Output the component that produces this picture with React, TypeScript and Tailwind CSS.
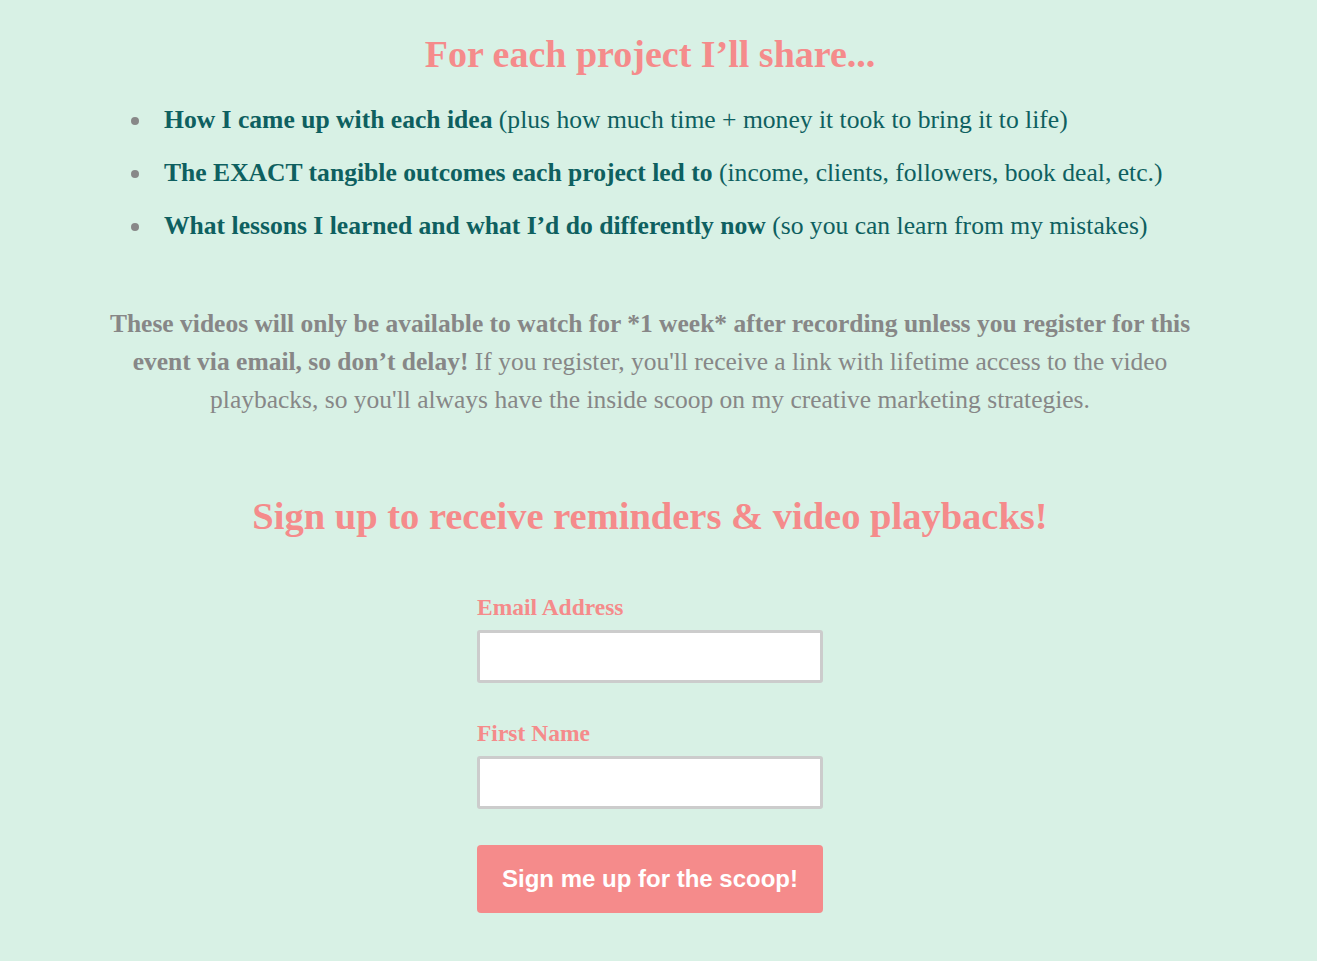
import React from 'react';

const serif = "font-['Liberation_Serif','DejaVu_Serif',serif]";

const bullets = [
  { strong: 'How I came up with each idea', rest: ' (plus how much time + money it took to bring it to life)' },
  { strong: 'The EXACT tangible outcomes each project led to', rest: ' (income, clients, followers, book deal, etc.)' },
  { strong: 'What lessons I learned and what I’d do differently now', rest: ' (so you can learn from my mistakes)' },
];

export default function App() {
  return (
    <div className={`min-h-[961px] w-full bg-[#d8f1e5] pr-[17px] ${serif}`}>
      <div className="mx-auto flex w-full max-w-[1100px] flex-col items-center pt-[30px]">
        <h2 className="text-center text-[38px] font-bold leading-[48px] text-[#f58b8b]">
          For each project I’ll share...
        </h2>

        <ul className="mt-[26px] w-full list-disc space-y-[21px] pl-[53px] text-[25.6px] leading-[32px] text-[#0e6060] marker:text-[#888888]">
          {bullets.map((b) => (
            <li key={b.strong} className="pl-[11px]">
              <strong className="font-bold">{b.strong}</strong>
              {b.rest}
            </li>
          ))}
        </ul>

        <p className="mt-[63px] w-full text-center text-[25.5px] leading-[38px] text-[#878787]">
          <strong className="font-bold">
            These videos will only be available to watch for *1 week* after recording unless you register for this
            <br />
            event via email, so don’t delay!
          </strong>{' '}
          If you register, you'll receive a link with lifetime access to the video
          <br />
          playbacks, so you'll always have the inside scoop on my creative marketing strategies.
        </p>

        <h2 className="mt-[71px] text-center text-[38.5px] font-bold leading-[52px] text-[#f58b8b]">
          Sign up to receive reminders &amp; video playbacks!
        </h2>

        <form className="mt-[51px] flex w-[346px] flex-col" onSubmit={(e) => e.preventDefault()}>
          <label className="block">
            <span className="block text-[23.5px] font-bold leading-[28px] text-[#f58b8b]">Email Address</span>
            <input
              type="email"
              className="mt-[9px] block h-[53px] w-full rounded-[3px] border-[3px] border-[#cccccc] bg-white px-3 outline-none"
            />
          </label>
          <label className="mt-[36px] block">
            <span className="block text-[23.5px] font-bold leading-[28px] text-[#f58b8b]">First Name</span>
            <input
              type="text"
              className="mt-[9px] block h-[53px] w-full rounded-[3px] border-[3px] border-[#cccccc] bg-white px-3 outline-none"
            />
          </label>
          <button
            type="submit"
            className="mt-[36px] h-[68px] w-full rounded-[4px] bg-[#f58b8b] font-['Liberation_Sans',Arial,sans-serif] text-[24px] font-bold text-white"
          >
            Sign me up for the scoop!
          </button>
        </form>
      </div>
    </div>
  );
}
